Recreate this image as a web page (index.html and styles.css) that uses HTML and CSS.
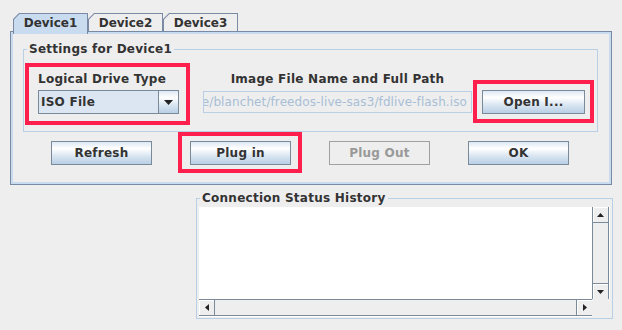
FILE: index.html
```html
<!DOCTYPE html>
<html lang="en">
<head>
    <meta charset="UTF-8">
    <title>Virtual Media</title>
    <link rel="stylesheet" href="styles.css">
</head>
<body>
    <div class="tabbed">
        <div class="tab-row">
            <div class="tab tab-active"><span class="tab-label">Device1</span></div>
            <div class="tab"><span class="tab-label">Device2</span></div>
            <div class="tab"><span class="tab-label">Device3</span></div>
        </div>
        <div class="tab-panel">
            <div class="titled settings">
                <div class="titled-head"><span class="titled-title">Settings for Device1</span></div>
                <div class="titled-body settings-body">
                    <div class="field drive marked">
                        <div class="field-label">Logical Drive Type</div>
                        <div class="combo">
                            <span class="combo-value">ISO File</span>
                            <span class="combo-arrow">
                                <svg width="9" height="5" viewBox="0 0 9 5"><polygon points="0,0 9,0 4.5,5" fill="#222"/></svg>
                            </span>
                        </div>
                    </div>
                    <div class="field path">
                        <div class="field-label centered">Image File Name and Full Path</div>
                        <div class="textfield"><span>/home/blanchet/freedos-live-sas3/fdlive-flash.iso</span></div>
                    </div>
                    <div class="open-wrap marked">
                        <button class="btn btn-open">Open I...</button>
                    </div>
                </div>
            </div>
            <div class="button-row">
                <button class="btn btn-refresh">Refresh</button>
                <div class="plug-wrap marked">
                    <button class="btn">Plug in</button>
                </div>
                <button class="btn btn-unplug" disabled>Plug Out</button>
                <button class="btn btn-ok">OK</button>
            </div>
        </div>
    </div>

    <div class="titled history">
        <div class="titled-head"><span class="titled-title">Connection Status History</span></div>
        <div class="titled-body history-body">
            <div class="scrollpane">
                <div class="log"></div>
                <div class="vscroll">
                    <span class="sb-btn sb-up">
                        <svg width="7" height="4" viewBox="0 0 7 4"><polygon points="0,4 3.5,0 7,4" fill="#222"/></svg>
                    </span>
                    <span class="sb-btn sb-down">
                        <svg width="7" height="4" viewBox="0 0 7 4"><polygon points="0,0 7,0 3.5,4" fill="#222"/></svg>
                    </span>
                </div>
                <div class="hscroll">
                    <span class="sb-btn sb-left">
                        <svg width="4" height="7" viewBox="0 0 4 7"><polygon points="4,0 4,7 0,3.5" fill="#222"/></svg>
                    </span>
                    <span class="sb-btn sb-right">
                        <svg width="4" height="7" viewBox="0 0 4 7"><polygon points="0,0 4,3.5 0,7" fill="#222"/></svg>
                    </span>
                </div>
                <div class="corner"></div>
            </div>
        </div>
    </div>
</body>
</html>
```

FILE: styles.css
```css
body {
    margin: 0;
    background-color: #eeeeee;
    font-family: "DejaVu Sans", sans-serif;
    font-size: 12px;
    font-weight: bold;
    letter-spacing: 0.25px;
    color: #333333;
}

/* tabbed pane */
.tabbed {
    margin: 13px 0 0 10px;
    width: 602px;
}
.tab-row {
    display: flex;
    align-items: flex-start;
    height: 18px;
    padding-left: 3px;
}
.tab {
    width: 75px;
    height: 18px;
    box-sizing: border-box;
    padding: 1px 1px 0 1px;
    background-color: #7a8aa5;
    clip-path: polygon(0 6px, 6px 0, 100% 0, 100% 100%, 0 100%);
}
.tab-label {
    display: block;
    height: 100%;
    box-sizing: border-box;
    padding-top: 1px;
    line-height: 16px;
    text-align: center;
    letter-spacing: 0;
    background-color: #eeeeee;
    clip-path: polygon(0 5.5px, 5.5px 0, 100% 0, 100% 100%, 0 100%);
}
.tab-active {
    position: relative;
    z-index: 1;
    height: 21px;
}
.tab-active .tab-label {
    background-color: #c8dbef;
}
.tab-panel {
    border: 1px solid #7a8aa5;
    box-shadow: inset 0 0 0 2px #c8dbef;
    padding: 9px 13px 15px 12px;
}

/* titled borders */
.titled-head {
    display: flex;
    height: 16px;
    line-height: 16px;
}
.titled-head::before,
.titled-head::after {
    content: "";
    height: 8px;
    align-self: flex-end;
    border-top: 1px solid #b8cfe5;
    box-sizing: border-box;
}
.titled-head::before {
    width: 4px;
    border-left: 1px solid #b8cfe5;
}
.titled-head::after {
    flex: 1;
    border-right: 1px solid #b8cfe5;
}
.titled-title {
    padding: 0 2px;
}
.titled-body {
    border: 1px solid #b8cfe5;
    border-top: none;
}

/* settings */
.settings-body {
    display: flex;
    align-items: flex-start;
    padding: 10px 0 10px 5px;
}
.marked {
    outline: 4px solid #ff1f4c;
}
.field-label {
    line-height: 16px;
    white-space: nowrap;
}
.centered {
    text-align: center;
}
.drive {
    width: 157px;
    box-sizing: border-box;
    padding: 4px 7px 7px 9px;
}
.path {
    width: 269px;
    margin-left: 17px;
    padding-top: 4px;
}
.combo {
    display: flex;
    margin-top: 3px;
    height: 24px;
    box-sizing: border-box;
    border: 1px solid #7a8a99;
    background-color: #dbe6f2;
}
.combo-value {
    flex: 1;
    padding-left: 2px;
    line-height: 22px;
}
.combo-arrow {
    width: 19px;
    display: flex;
    align-items: center;
    justify-content: center;
    border-left: 1px solid #7a8a99;
    background: linear-gradient(#dde8f3, #ffffff 30%, #dde8f3 60%, #b8cfe5);
}
.textfield {
    display: flex;
    justify-content: flex-end;
    overflow: hidden;
    margin-top: 4px;
    height: 22px;
    box-sizing: border-box;
    padding-right: 4px;
    border: 1px solid #b8cfe5;
    font-weight: normal;
    letter-spacing: 0.1px;
    line-height: 20px;
    white-space: nowrap;
    color: #a8bed6;
}
.open-wrap {
    margin: 17px 0 0 5px;
    padding: 6px 5px 5px 5px;
}

/* buttons */
.btn {
    display: block;
    width: 101px;
    height: 24px;
    padding: 0;
    border: 1px solid #7a8a99;
    background: linear-gradient(#dde8f3, #ffffff 30%, #dde8f3 60%, #b8cfe5);
    font-family: inherit;
    font-size: 12px;
    font-weight: bold;
    letter-spacing: 0.25px;
    color: #333333;
}
.btn-open {
    width: 103px;
}
.btn:disabled {
    background: #eeeeee;
    border-color: #a0a0a0;
    color: #999999;
}
.button-row {
    display: flex;
    align-items: flex-start;
    margin-top: 4px;
    padding-left: 28px;
}
.button-row > .btn {
    margin-top: 5px;
}
.plug-wrap {
    margin-left: 30px;
    padding: 5px 7px 4px 8px;
}
.btn-unplug {
    margin-left: 31px;
}
.btn-ok {
    margin-left: 38px;
}

/* connection history */
.history {
    width: 417px;
    margin: 5px 0 0 196px;
}
.history-body {
    padding: 1px 3px 2px 2px;
}
.scrollpane {
    display: grid;
    grid-template-columns: 1fr 17px;
    grid-template-rows: 92px 17px;
}
.log {
    background-color: #ffffff;
}
.vscroll {
    display: flex;
    flex-direction: column;
    justify-content: space-between;
    box-sizing: border-box;
    border-left: 1px solid #7a8a99;
    border-right: 1px solid #7a8a99;
    box-shadow: 1px 0 0 #ffffff;
}
.hscroll {
    display: flex;
    justify-content: space-between;
    box-sizing: border-box;
    border-top: 1px solid #7a8a99;
    border-bottom: 1px solid #7a8a99;
    box-shadow: 0 1px 0 #ffffff;
}
.sb-btn {
    display: flex;
    align-items: center;
    justify-content: center;
    box-sizing: border-box;
    box-shadow: inset 1px 1px 0 #ffffff;
}
.sb-up,
.sb-down {
    height: 16px;
}
.sb-up {
    border-bottom: 1px solid #7a8a99;
}
.sb-down {
    border-top: 1px solid #7a8a99;
}
.sb-left,
.sb-right {
    width: 16px;
}
.sb-left {
    border-right: 1px solid #7a8a99;
}
.sb-right {
    border-left: 1px solid #7a8a99;
}
```
